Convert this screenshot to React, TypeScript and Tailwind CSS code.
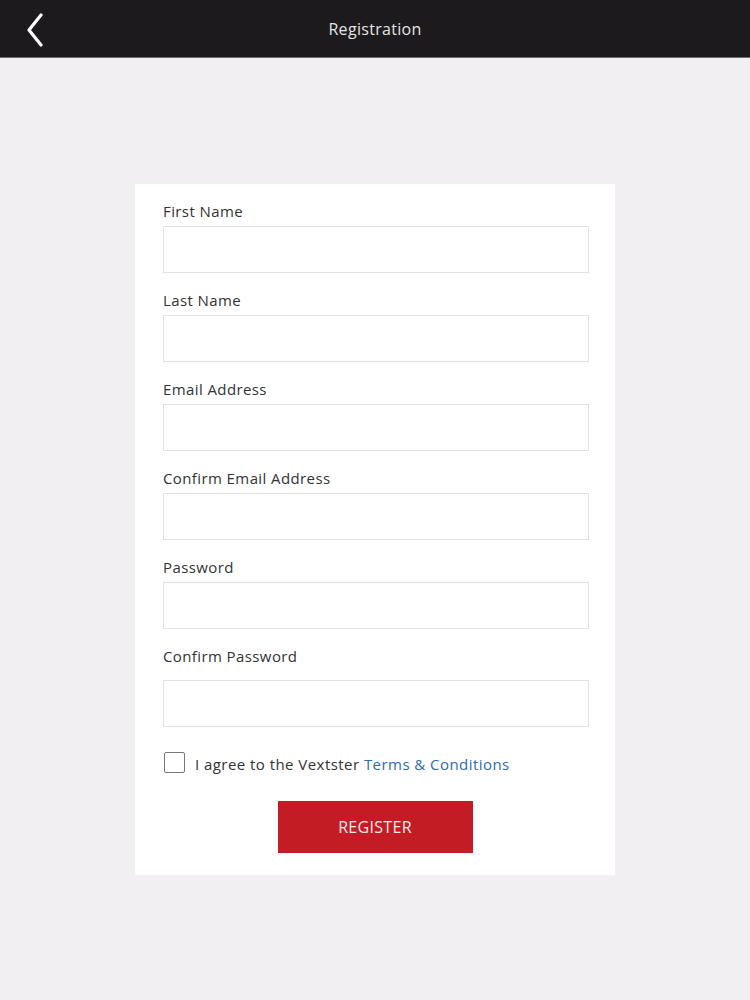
const fields = [
  { label: "First Name", type: "text" },
  { label: "Last Name", type: "text" },
  { label: "Email Address", type: "email" },
  { label: "Confirm Email Address", type: "email" },
  { label: "Password", type: "password" },
  { label: "Confirm Password", type: "password" },
];

export default function App() {
  return (
    <div className="min-h-[1000px] w-[750px] bg-[#f1eff2] font-['Open_Sans',sans-serif]">
      <header className="relative flex h-[58px] items-center justify-center bg-[#1c1a1d] border-b border-[#6b6b6b]">
        <button className="absolute left-[24px] top-[13px] text-white">
          <svg width="22" height="34" viewBox="0 0 22 34" fill="none">
            <path d="M17 2 L5 17 L17 32" stroke="currentColor" strokeWidth="3.2" strokeLinecap="round" strokeLinejoin="round" />
          </svg>
        </button>
        <h1 className="text-[16px] text-[#e4e4e4] tracking-[0.3px]">Registration</h1>
      </header>

      <main className="flex justify-center pt-[126px]">
        <form className="w-[480px] bg-white px-[28px] pt-[17px] pb-[22px]">
          {fields.map((f, i) => (
            <div key={f.label} className={i > 0 ? "mt-[17px]" : ""}>
              <label className="block text-[15px] leading-[20px] text-[#333] tracking-[0.4px]">{f.label}</label>
              <input
                type={f.type}
                className={
                  "block h-[47px] w-[426px] border border-[#e2e2e2] bg-white outline-none " +
                  (i === fields.length - 1 ? "mt-[14px]" : "mt-[5px]")
                }
              />
            </div>
          ))}

          <div className="mt-[24px] flex items-center">
            <span className="h-[21px] w-[21px] border border-[#777] rounded-[2px] ml-[1px]" />
            <span className="ml-[10px] text-[15px] leading-[20px] text-[#333] tracking-[0.45px] mt-[3px]">
              I agree to the Vextster <span className="text-[#2d6cb3]">Terms &amp; Conditions</span>
            </span>
          </div>

          <div className="mt-[27px] flex justify-center">
            <button
              type="button"
              className="h-[52px] w-[195px] bg-[#c41c24] text-[16px] text-[#f4e9e9] uppercase tracking-[0.3px]"
            >
              Register
            </button>
          </div>
        </form>
      </main>
    </div>
  );
}
